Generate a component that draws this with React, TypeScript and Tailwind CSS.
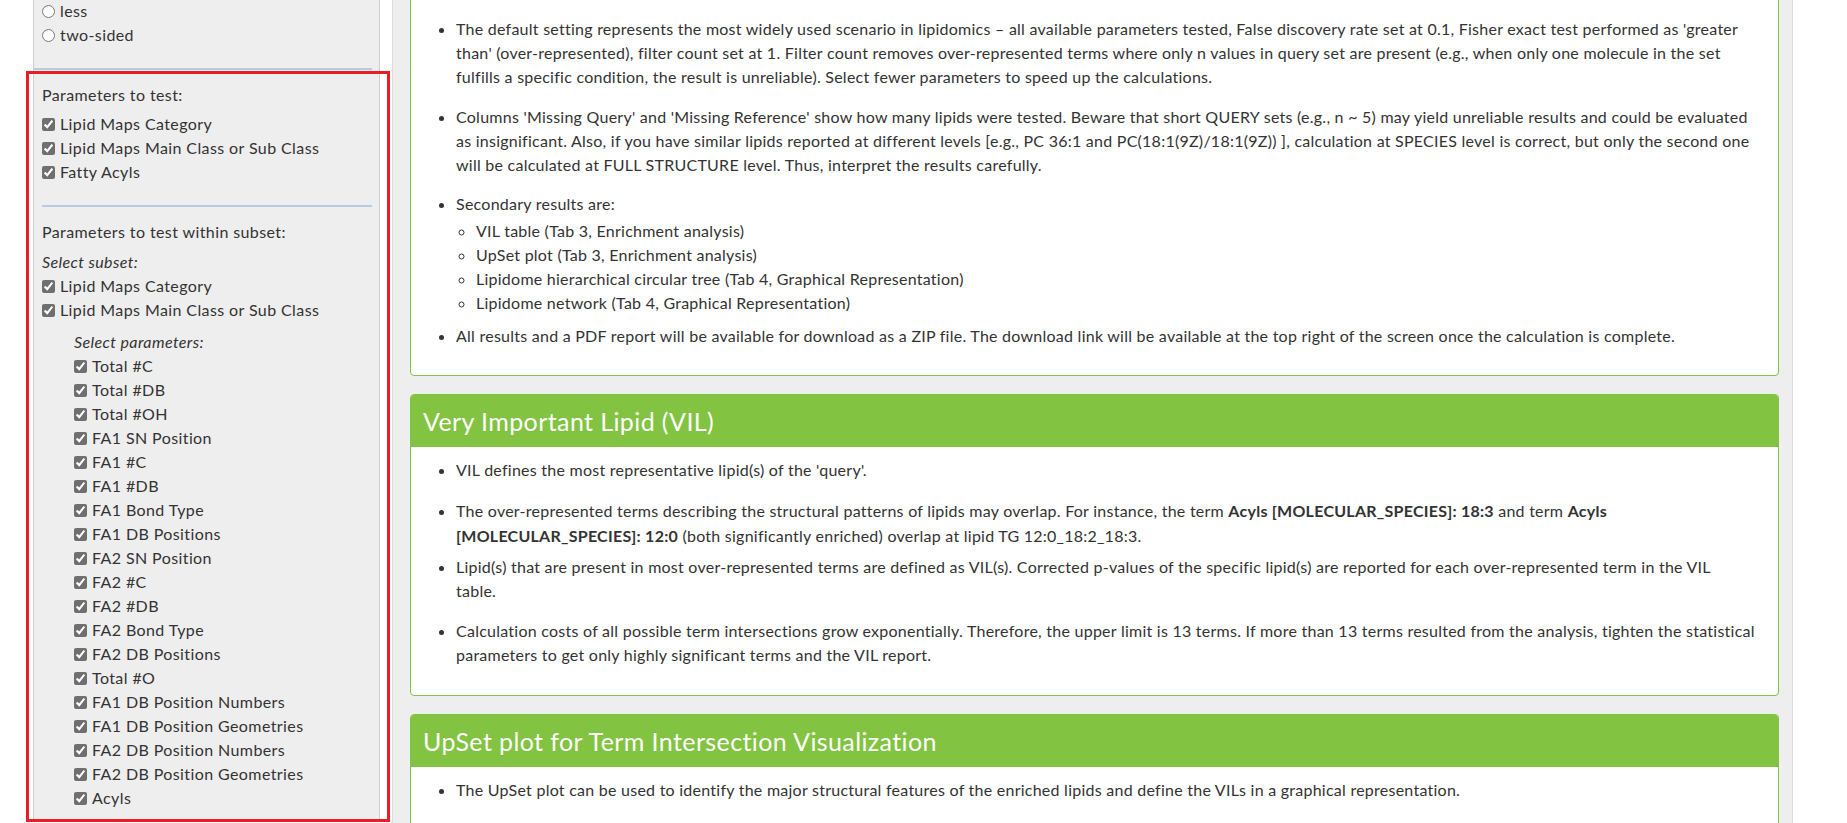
import React from 'react';

const topParams = ['Lipid Maps Category', 'Lipid Maps Main Class or Sub Class', 'Fatty Acyls'];
const subsetParams = ['Lipid Maps Category', 'Lipid Maps Main Class or Sub Class'];
const subParams = [
  'Total #C',
  'Total #DB',
  'Total #OH',
  'FA1 SN Position',
  'FA1 #C',
  'FA1 #DB',
  'FA1 Bond Type',
  'FA1 DB Positions',
  'FA2 SN Position',
  'FA2 #C',
  'FA2 #DB',
  'FA2 Bond Type',
  'FA2 DB Positions',
  'Total #O',
  'FA1 DB Position Numbers',
  'FA1 DB Position Geometries',
  'FA2 DB Position Numbers',
  'FA2 DB Position Geometries',
  'Acyls',
];

const CheckRow = ({ label }: { label: string }) => (
  <label className="flex h-[24px] items-center gap-[5px]">
    <input type="checkbox" defaultChecked className="m-0 h-[13px] w-[13px] accent-[#6f6f6f]" />
    <span>{label}</span>
  </label>
);

const RadioRow = ({ label }: { label: string }) => (
  <label className="flex h-[24px] items-center gap-[5px]">
    <input type="radio" name="alt" className="m-0 h-[13px] w-[13px]" />
    <span>{label}</span>
  </label>
);

const Sidebar = () => (
  <div className="relative w-[390px] shrink-0">
    <div className="ml-[33px] h-full w-[347px] border-x border-[#cfcfcf] bg-[#eeeeee] pr-[7px] text-[16px] tracking-[0.4px] text-[#333]">
      <div className="pl-[8px] -mt-[1px]">
        <RadioRow label="less" />
        <RadioRow label="two-sided" />
      </div>
      <div className="mt-[21px] h-[2px] bg-[#b9cbe4]" />
      <div className="pl-[8px]">
        <div className="mt-[13px] flex h-[24px] items-center">Parameters to test:</div>
        <div className="mt-[5px]">
          {topParams.map(p => (
            <CheckRow key={p} label={p} />
          ))}
        </div>
        <div className="mt-[21px] h-[2px] bg-[#b9cbe4]" />
        <div className="mt-[13px] flex h-[24px] items-center">Parameters to test within subset:</div>
        <div className="mt-[6px] flex h-[24px] items-center italic">Select subset:</div>
        {subsetParams.map(p => (
          <CheckRow key={p} label={p} />
        ))}
        <div className="mt-[8px] pl-[32px]">
          <div className="flex h-[24px] items-center italic">Select parameters:</div>
          {subParams.map(p => (
            <CheckRow key={p} label={p} />
          ))}
        </div>
      </div>
    </div>
    {/* red highlight frame drawn over the sidebar */}
    <div className="pointer-events-none absolute left-[26px] top-[71px] h-[751px] w-[364px] border-[3px] border-[#ea1c24]" />
  </div>
);

const Panel = ({ title, children, className }: { title?: string; children: React.ReactNode; className?: string }) => (
  <div className={`rounded-[4px] border border-[#82c341] bg-white ${className ?? ''}`}>
    {title && (
      <div className="flex h-[52px] items-center rounded-t-[3px] bg-[#82c341] px-[12px] text-[25px] tracking-[0.4px] text-white">
        {title}
      </div>
    )}
    {children}
  </div>
);

export default function App() {
  return (
    <div
      className="flex h-[823px] w-[1847px] overflow-hidden bg-white"
      style={{ fontFamily: 'Lato, "Open Sans", sans-serif' }}
    >
      <Sidebar />
      <div className="ml-[2px] w-[1401px] shrink-0 border-x border-[#dcdcdc] bg-[#eeeeee] pl-[17px] pr-[13px] text-[16px] leading-[24px] tracking-[0.25px] text-[#333]">
        <Panel className="-mt-[12px]">
          <ul className="list-disc whitespace-nowrap pl-[45px] pr-[8px] pt-[28px] pb-[27px]">
            <li>
              The default setting represents the most widely used scenario in lipidomics – all available parameters
              tested, False discovery rate set at 0.1, Fisher exact test performed as 'greater
              <br />
              than' (over-represented), filter count set at 1. Filter count removes over-represented terms where only n
              values in query set are present (e.g., when only one molecule in the set
              <br />
              fulfills a specific condition, the result is unreliable). Select fewer parameters to speed up the
              calculations.
            </li>
            <li className="mt-[16px]">
              Columns 'Missing Query' and 'Missing Reference' show how many lipids were tested. Beware that short QUERY
              sets (e.g., n ~ 5) may yield unreliable results and could be evaluated
              <br />
              as insignificant. Also, if you have similar lipids reported at different levels [e.g., PC 36:1 and
              PC(18:1(9Z)/18:1(9Z)) ], calculation at SPECIES level is correct, but only the second one
              <br />
              will be calculated at FULL STRUCTURE level. Thus, interpret the results carefully.
            </li>
            <li className="mt-[15px]">
              Secondary results are:
              <ul className="mt-[3px] list-[circle] pl-[20px]">
                <li>VIL table (Tab 3, Enrichment analysis)</li>
                <li>UpSet plot (Tab 3, Enrichment analysis)</li>
                <li>Lipidome hierarchical circular tree (Tab 4, Graphical Representation)</li>
                <li>Lipidome network (Tab 4, Graphical Representation)</li>
              </ul>
            </li>
            <li className="mt-[9px]">
              All results and a PDF report will be available for download as a ZIP file. The download link will be
              available at the top right of the screen once the calculation is complete.
            </li>
          </ul>
        </Panel>

        <Panel title="Very Important Lipid (VIL)" className="mt-[18px]">
          <ul className="list-disc whitespace-nowrap pl-[45px] pr-[8px] pt-[11px] pb-[28px]">
            <li>VIL defines the most representative lipid(s) of the 'query'.</li>
            <li className="mt-[16px] leading-[25px]">
              The over-represented terms describing the structural patterns of lipids may overlap. For instance, the
              term <b>Acyls [MOLECULAR_SPECIES]: 18:3</b> and term <b>Acyls</b>
              <br />
              <b>[MOLECULAR_SPECIES]: 12:0</b> (both significantly enriched) overlap at lipid TG 12:0_18:2_18:3.
            </li>
            <li className="mt-[7px]">
              Lipid(s) that are present in most over-represented terms are defined as VIL(s). Corrected p-values of the
              specific lipid(s) are reported for each over-represented term in the VIL
              <br />
              table.
            </li>
            <li className="mt-[16px]">
              Calculation costs of all possible term intersections grow exponentially. Therefore, the upper limit is 13
              terms. If more than 13 terms resulted from the analysis, tighten the statistical
              <br />
              parameters to get only highly significant terms and the VIL report.
            </li>
          </ul>
        </Panel>

        <Panel title="UpSet plot for Term Intersection Visualization" className="mt-[18px]">
          <ul className="list-disc whitespace-nowrap pl-[45px] pr-[8px] pt-[11px] pb-[27px]">
            <li>
              The UpSet plot can be used to identify the major structural features of the enriched lipids and define
              the VILs in a graphical representation.
            </li>
          </ul>
        </Panel>
      </div>
    </div>
  );
}
